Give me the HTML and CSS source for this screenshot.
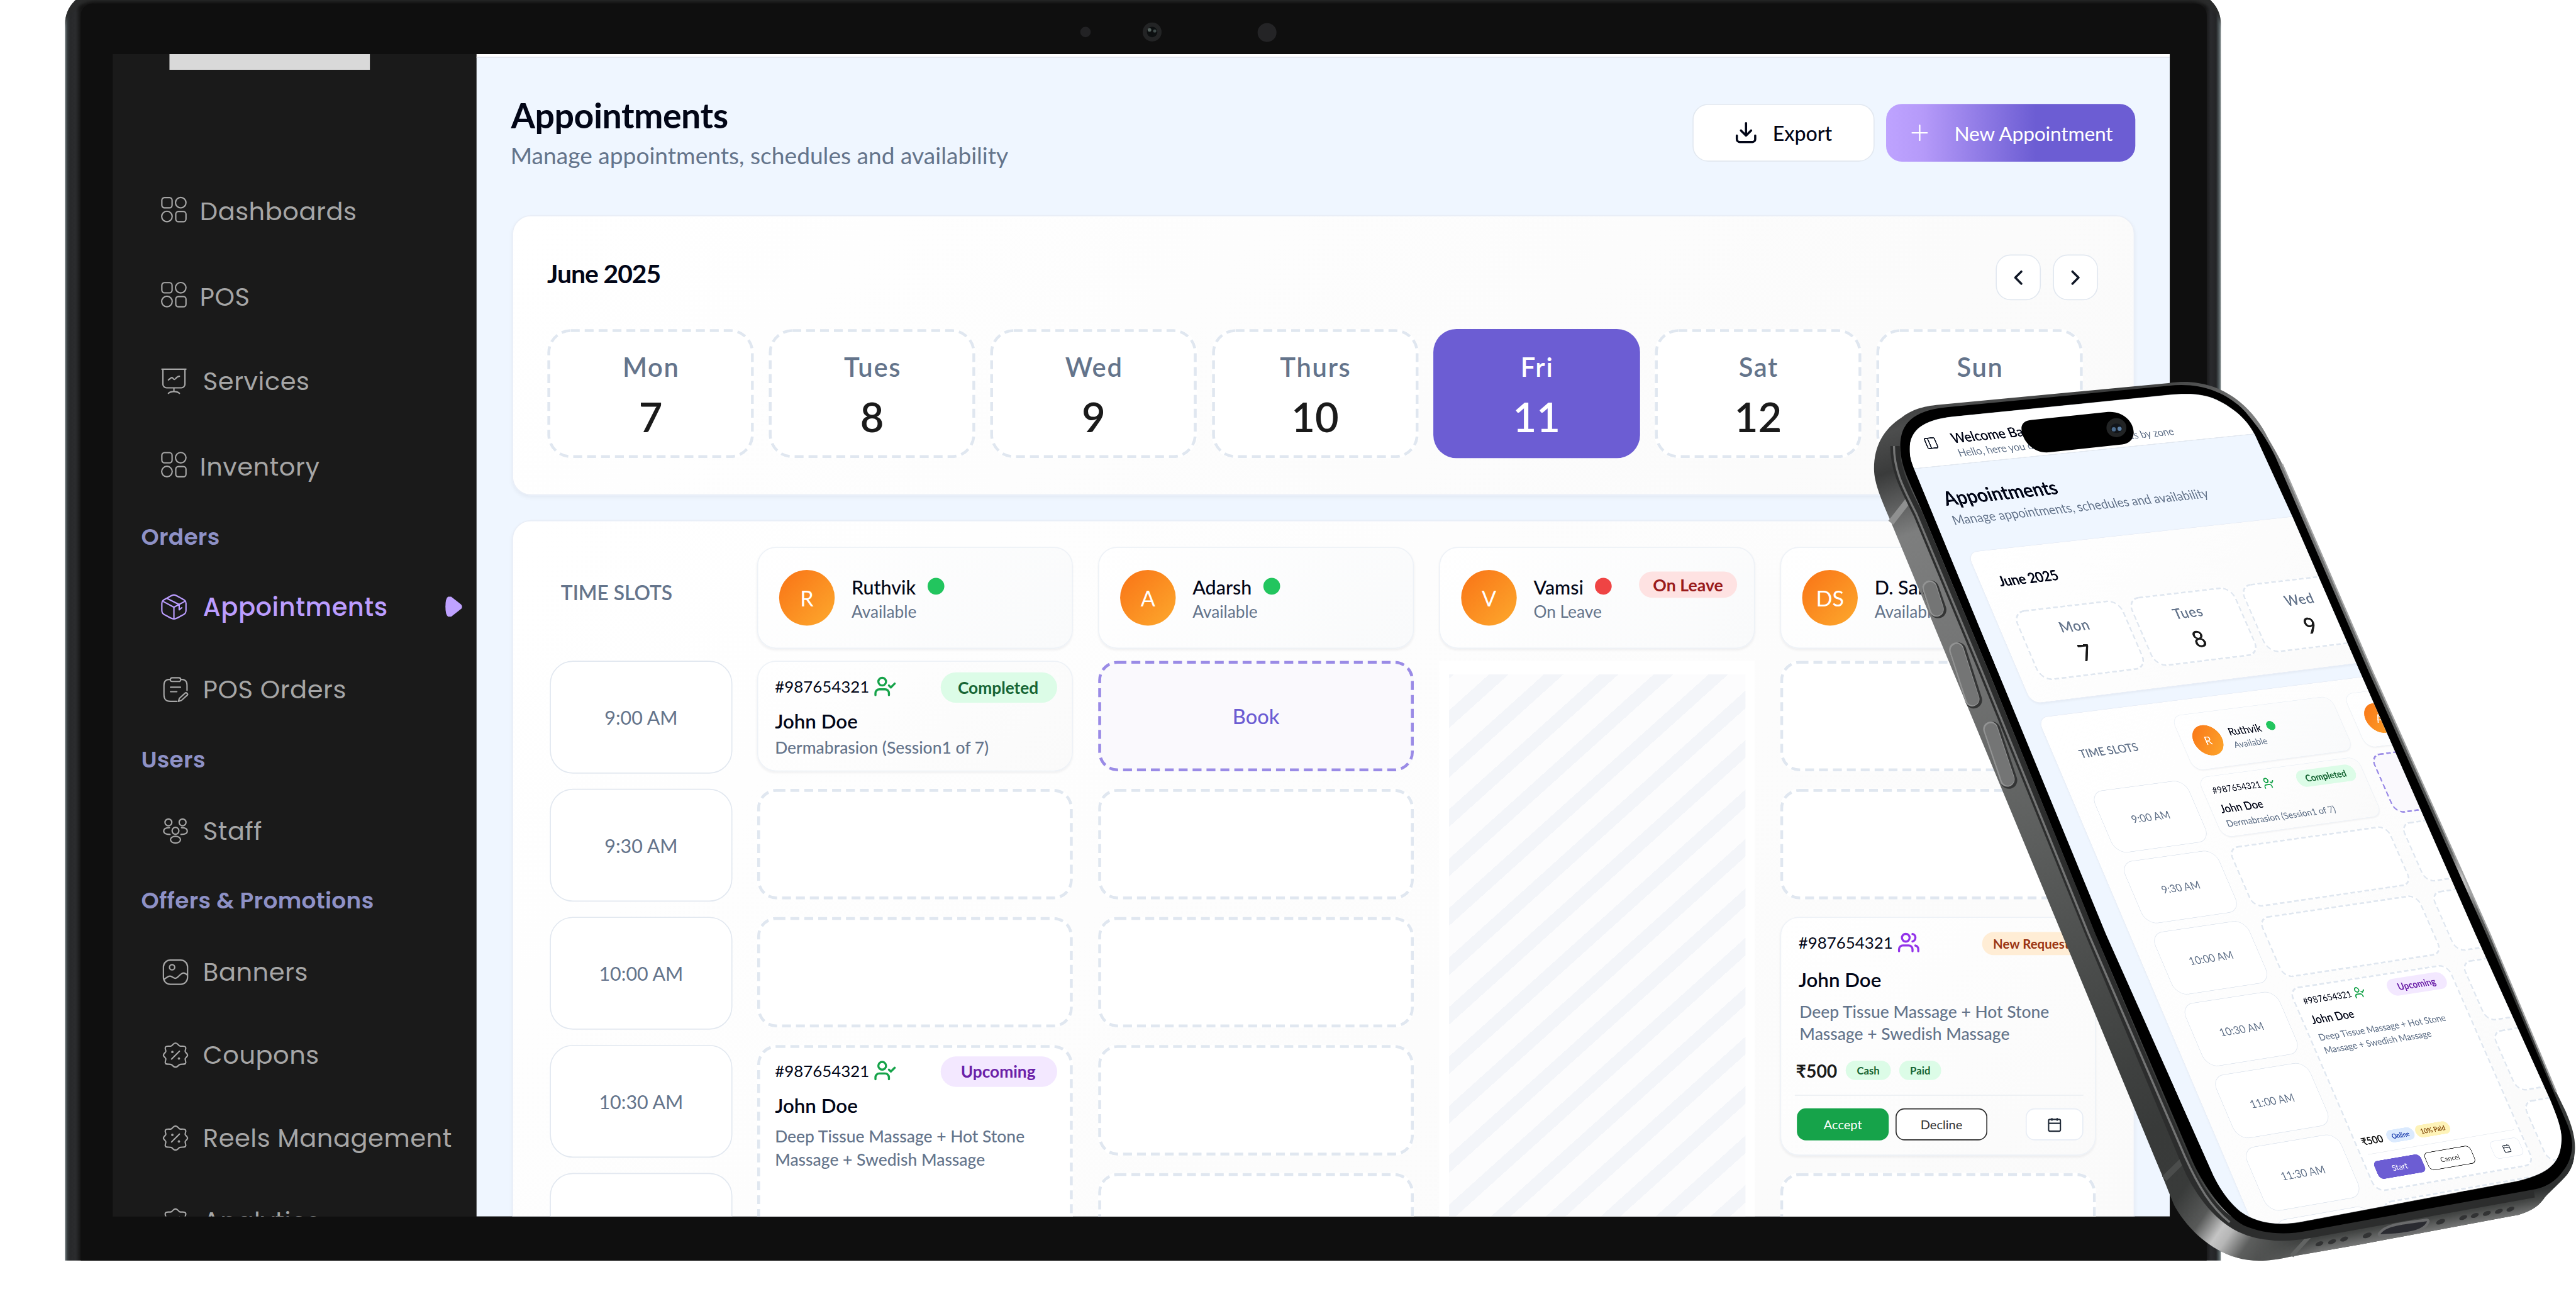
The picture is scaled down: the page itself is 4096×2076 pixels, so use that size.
FILE: index.html
```html
<!DOCTYPE html>
<html lang="en">
<head>
<meta charset="utf-8">
<title>Appointments</title>
<link rel="stylesheet" href="styles.css">
</head>
<body>
<svg class="defs" aria-hidden="true">
  <symbol id="i-grid" viewBox="0 0 49 49"><rect x="1.5" y="1.5" width="19.5" height="19.5" rx="5"/><circle cx="37.5" cy="11.2" r="10"/><circle cx="11.2" cy="37.5" r="10"/><rect x="28" y="28" width="19.5" height="19.5" rx="5"/></symbol>
  <symbol id="i-board" viewBox="0 0 49 49"><path d="M1.5 1.5h46M3.5 1.5V30a7 7 0 0 0 7 7h28a7 7 0 0 0 7-7V1.5M24.500 37v7M14 47.500c3-3 7-3.500 10.500-3.500s7.500.5 10.500 3.500M14 22l6-4.500c2-1.500 3 3.500 5.500 3.500S29 15 35 15"/></symbol>
  <symbol id="i-box" viewBox="0 0 49 49"><path d="M24.500 1.500c3 0 5 1.500 12 5.500 9 5 11 5.500 11 11v13c0 6-2 6.500-11 11.500-7 4-9 5-12 5s-5-1-12-5c-9-5-11-5.500-11-11.500V18c0-5.500 2-6 11-11 7-4 9-5.500 12-5.500zM24.500 25v22M24.500 25L3 13.500M24.500 25L46 13.500M12 8.500l22.500 11.500v10l5-4"/></symbol>
  <symbol id="i-clip" viewBox="0 0 49 49"><path d="M15 4.500c-9 0-12.500 3-12.500 12v17c0 9 3.500 13 12.500 13h12M34 4.500c9 0 12.500 3 12.500 12v9M18 1.500h13a3.500 3.500 0 0 1 0 7H18a3.500 3.500 0 0 1 0-7zM15 19.500h19M15 28h12M30 46.500l2-6 11-10c2-2 6 2 4 4l-11 10z"/></symbol>
  <symbol id="i-team" viewBox="0 0 49 49"><circle cx="11" cy="8" r="6.500"/><circle cx="38" cy="8" r="6.500"/><circle cx="24.500" cy="24" r="6.500"/><ellipse cx="24.500" cy="41" rx="9.500" ry="6.500"/><path d="M14 31c-6 0-12-1.500-12-6.500s5-6.500 11-6.500M35 31c6 0 12-1.500 12-6.500s-5-6.500-11-6.500"/></symbol>
  <symbol id="i-image" viewBox="0 0 49 49"><rect x="1.500" y="1.500" width="46" height="46" rx="13"/><circle cx="18" cy="15" r="5"/><path d="M3 38c5-4 8-6 11-6 5 0 6 5 11 4s9-10 15-10c3 0 5 2 7 4"/></symbol>
  <symbol id="i-pct" viewBox="0 0 49 49"><path d="M24.500 1.500c4 0 5 4 8 5.500s9-1 11 2-1 6-.5 8.500 4.500 4 4.500 7-4 4.500-4.500 7 2.500 6.500.5 9-8 .5-11 2-4 5-8 5-5-3.500-8-5-9 .5-11-2 1-6.500.5-9-4.500-4-4.500-7 4-4.500 4.500-7-2.500-5.500-.5-8.500 8-.5 11-2 4-5.500 8-5.500zM17 32l15-15"/><circle cx="18.500" cy="18.500" r="1"/><circle cx="31" cy="31" r="1"/></symbol>
  <symbol id="i-check" viewBox="0 0 24 24"><path d="m16 11 2 2 4-4M16 21v-2a4 4 0 0 0-4-4H6a4 4 0 0 0-4 4v2"/><circle cx="9" cy="7" r="4"/></symbol>
  <symbol id="i-users" viewBox="0 0 24 24"><path d="M16 21v-2a4 4 0 0 0-4-4H6a4 4 0 0 0-4 4v2M16 3.130a4 4 0 0 1 0 7.750M22 21v-2a4 4 0 0 0-3-3.870"/><circle cx="9" cy="7" r="4"/></symbol>
  <symbol id="i-cal" viewBox="0 0 24 24"><path d="M8 2v4M16 2v4M3 10h18"/><rect x="3" y="4" width="18" height="18" rx="2"/></symbol>
  <symbol id="i-down" viewBox="0 0 24 24"><path d="M12 1.500V15M6.500 9.500 12 15l5.500-5.500M2 15v4a3 3 0 0 0 3 3h14a3 3 0 0 0 3-3v-4"/></symbol>
  <symbol id="i-plus" viewBox="0 0 24 24"><path d="M12 2v20M2 12h20"/></symbol>
  <symbol id="i-prev" viewBox="0 0 24 24"><path d="m15 18-6-6 6-6"/></symbol>
  <symbol id="i-next" viewBox="0 0 24 24"><path d="m9 18 6-6-6-6"/></symbol>
  <symbol id="i-panel" viewBox="0 0 24 24"><rect x="3" y="3" width="18" height="18" rx="2"/><path d="M9 3v18"/></symbol>
</svg>

<div class="window">
<div class="stage">
  <div class="laptop">
    <div class="bezel">
      <svg class="cams" viewBox="0 0 400 44"><circle cx="28" cy="22" r="10" fill="#222224"/><circle cx="155" cy="22" r="18" fill="#232425"/><circle cx="155" cy="22" r="10" fill="#0c0f10"/><circle cx="150" cy="18" r="3.500" fill="#56635f"/><circle cx="160" cy="20" r="3" fill="#3f4b4a"/><circle cx="374" cy="23" r="18" fill="#242426"/></svg>
      <div class="screen">
        <nav class="side">
          <div class="logo"></div>
          <a class="item near"><svg><use href="#i-grid"/></svg><span>Dashboards</span></a>
          <a class="item near"><svg><use href="#i-grid"/></svg><span>POS</span></a>
          <a class="item first"><svg><use href="#i-board"/></svg><span>Services</span></a>
          <a class="item near"><svg><use href="#i-grid"/></svg><span>Inventory</span></a>
          <h3>Orders</h3>
          <a class="item active"><svg><use href="#i-box"/></svg><span>Appointments</span><svg class="arrow" viewBox="0 0 33 40"><path d="M5 1h6l18 14q6 5 0 10L11 39H5q-5-3-5-19T5 1z"/></svg></a>
          <a class="item"><svg><use href="#i-clip"/></svg><span>POS Orders</span></a>
          <h3>Users</h3>
          <a class="item"><svg><use href="#i-team"/></svg><span>Staff</span></a>
          <h3>Offers &amp; Promotions</h3>
          <a class="item"><svg><use href="#i-image"/></svg><span>Banners</span></a>
          <a class="item"><svg><use href="#i-pct"/></svg><span>Coupons</span></a>
          <a class="item"><svg><use href="#i-pct"/></svg><span>Reels Management</span></a>
          <a class="item"><svg><use href="#i-pct"/></svg><span>Analytics</span></a>
        </nav>
        <div class="view">
          <div class="strip"></div>
          <main class="main">
            <header class="head">
              <div><h1>Appointments</h1><p>Manage appointments, schedules and availability</p></div>
              <div class="actions">
                <button class="btn"><svg><use href="#i-down"/></svg>Export</button>
                <button class="btn primary"><svg><use href="#i-plus"/></svg>New Appointment</button>
              </div>
            </header>
            <section class="card month">
              <div class="month-head"><h2>June 2025</h2><div class="arrows"><button><svg><use href="#i-prev"/></svg></button><button><svg><use href="#i-next"/></svg></button></div></div>
              <div class="days">
                <div class="day"><svg class="dash"><rect/></svg><span>Mon</span><b>7</b></div>
                <div class="day"><svg class="dash"><rect/></svg><span>Tues</span><b>8</b></div>
                <div class="day"><svg class="dash"><rect/></svg><span>Wed</span><b>9</b></div>
                <div class="day"><svg class="dash"><rect/></svg><span>Thurs</span><b>10</b></div>
                <div class="day on"><span>Fri</span><b>11</b></div>
                <div class="day"><svg class="dash"><rect/></svg><span>Sat</span><b>12</b></div>
                <div class="day"><svg class="dash"><rect/></svg><span>Sun</span></div>
              </div>
            </section>
            <section class="card plan">
              <div class="times"><h4>TIME SLOTS</h4><div>9:00 AM</div><div>9:30 AM</div><div>10:00 AM</div><div>10:30 AM</div><div></div></div>
              <div class="col">
                <div class="person"><i>R</i><div><b>Ruthvik<em></em></b><span>Available</span></div></div>
                <div class="cell solid"><div class="top"><span>#987654321</span><svg class="ok"><use href="#i-check"/></svg><mark class="green">Completed</mark></div><h5>John Doe</h5><p>Dermabrasion (Session1 of 7)</p></div>
                <div class="cell"><svg class="dash"><rect/></svg></div>
                <div class="cell"><svg class="dash"><rect/></svg></div>
                <div class="cell tall"><svg class="dash"><rect/></svg><div class="top"><span>#987654321</span><svg class="ok"><use href="#i-check"/></svg><mark class="violet">Upcoming</mark></div><h5>John Doe</h5><p class="two">Deep Tissue Massage + Hot Stone Massage + Swedish Massage</p></div>
              </div>
              <div class="col">
                <div class="person"><i>A</i><div><b>Adarsh<em></em></b><span>Available</span></div></div>
                <div class="cell book"><svg class="dash"><rect/></svg>Book</div>
                <div class="cell"><svg class="dash"><rect/></svg></div>
                <div class="cell"><svg class="dash"><rect/></svg></div>
                <div class="cell"><svg class="dash"><rect/></svg></div>
                <div class="cell"><svg class="dash"><rect/></svg></div>
              </div>
              <div class="col">
                <div class="person"><i>V</i><div><b>Vamsi<em class="off"></em></b><span>On Leave</span></div><mark class="red">On Leave</mark></div>
                <div class="leave"><div></div></div>
              </div>
              <div class="col">
                <div class="person"><i>DS</i><div><b>D. Sanjay<em></em></b><span>Available</span></div></div>
                <div class="cell"><svg class="dash"><rect/></svg></div>
                <div class="cell"><svg class="dash"><rect/></svg></div>
                <div class="cell solid request">
                  <div class="top"><span>#987654321</span><svg class="grp"><use href="#i-users"/></svg><mark class="orange">New Request</mark></div>
                  <h5>John Doe</h5><p class="two">Deep Tissue Massage + Hot Stone Massage + Swedish Massage</p>
                  <div class="pay"><b>₹500</b><mark class="green">Cash</mark><mark class="green">Paid</mark></div>
                  <div class="foot"><button class="accept">Accept</button><button>Decline</button><button class="cal"><svg><use href="#i-cal"/></svg></button></div>
                </div>
                <div class="cell"><svg class="dash"><rect/></svg></div>
              </div>
            </section>
          </main>
        </div>
      </div>
    </div>
  </div>

  <div class="phone">
    <svg class="body" viewBox="0 0 4910 2489">
      <defs>
        <linearGradient id="side" gradientUnits="userSpaceOnUse" x1="3600" y1="730" x2="4200" y2="2400">
          <stop offset="0" stop-color="#2b2c2c"/><stop offset=".05" stop-color="#4c4d4d"/><stop offset=".09" stop-color="#3a3b3b"/><stop offset=".16" stop-color="#7d7e7e"/><stop offset=".3" stop-color="#747575"/><stop offset=".5" stop-color="#5e605f"/><stop offset=".7" stop-color="#464847"/><stop offset=".85" stop-color="#383a39"/><stop offset="1" stop-color="#3a3c3b"/>
        </linearGradient>
        <linearGradient id="base" gradientUnits="userSpaceOnUse" x1="4560" y1="2318" x2="4568" y2="2362">
          <stop offset="0" stop-color="#2e3030"/><stop offset=".4" stop-color="#474948"/><stop offset="1" stop-color="#7d7e7e"/>
        </linearGradient>
        <linearGradient id="corner" gradientUnits="userSpaceOnUse" x1="4150" y1="2283" x2="4350" y2="2420">
          <stop offset="0" stop-color="#c4c4c4" stop-opacity="0"/><stop offset=".25" stop-color="#c4c4c4" stop-opacity=".22"/><stop offset=".42" stop-color="#c4c4c4"/><stop offset=".5" stop-color="#c4c4c4" stop-opacity=".9"/><stop offset=".66" stop-color="#c4c4c4" stop-opacity=".25"/><stop offset="1" stop-color="#c4c4c4" stop-opacity="0"/>
        </linearGradient>
        <linearGradient id="fade"><stop offset="0" stop-color="#fff" stop-opacity="0"/><stop offset=".2" stop-color="#fff"/></linearGradient>
        <mask id="lower"><path d="M4300 2240H4800L4910 2205V2480H4300Z" fill="url(#fade)"/></mask>
        <path id="shell" d="M3572 893C3572 850 3590 818 3624 796 3645 780 3665 774 3697 771L4133 730C4155 727 4172 727 4190 730 4245 738 4290 775 4318 825 4328 845 4340 862 4350 884L4522 1280 4746 1780 4872 2080 4890 2117C4900 2140 4909 2165 4908 2190 4907 2212 4902 2226 4893 2238 4880 2254 4862 2268 4850 2282 4842 2294 4830 2306 4800 2315L4783 2318 4500 2371 4363 2395C4320 2405 4290 2404 4262 2396 4215 2382 4172 2345 4146 2300 4138 2283 4126 2250 4110 2213L3604 994C3585 950 3572 920 3572 893Z"/>
      </defs>
      <use href="#shell" fill="url(#side)"/>
      <use href="#shell" fill="url(#base)" mask="url(#lower)"/>
      <use href="#shell" fill="url(#corner)"/>
      <path d="M4350 884L4522 1280 4746 1780 4872 2080" fill="none" stroke="#a2a3a3" stroke-width="3"/>
      <g fill="none">
        <path d="M3604 996L3640 950" stroke="#8f9090" stroke-width="12"/>
        <path d="M4125 2246L4166 2206" stroke="#4b4d4c" stroke-width="12"/>
        <path d="M4399 2343L4400 2358 4368 2393" stroke="#626463" stroke-width="8"/>
      </g>
      <g fill="none" stroke-linejoin="round">
        <path d="M3612 850C3612 900 3634 935 3656 980L3781 1280 3984 1780 4166 2214C4186 2262 4222 2316 4272 2340 4310 2358 4360 2358 4403 2350L4830 2273" stroke="#2c2d2d" stroke-width="18"/>
        <path d="M3610 850C3610 900 3631 935 3653 980L3778 1280 3981 1780 4165 2205C4190 2260 4214 2300 4250 2329" stroke="#747575" stroke-width="4"/>
      </g>
      <path fill="#000" d="M3622 851C3622 812 3640 783 3711 776L4133 735C4200 727 4250 752 4280 785 4304 814 4320 835 4337 870L4515 1280 4739 1780 4887 2127C4898 2152 4905 2170 4902 2192 4899 2212 4892 2224 4880 2238 4868 2252 4852 2262 4833 2266L4400 2345C4355 2354 4315 2351 4277 2335 4240 2316 4198 2258 4176 2206L3994 1780 3791 1280 3666 980C3645 930 3622 890 3622 851Z"/>
      <g stroke-linecap="round" fill="none">
        <path d="M3680 1122L3694 1162M3732 1240L3762 1334M3797 1391L3829 1487" stroke="#343535" stroke-width="32"/>
        <path d="M3678 1120L3691 1161M3729 1238L3759 1332M3794 1389L3826 1485" stroke="#929393" stroke-width="28"/>
        <path d="M3679 1121L3692 1161M3730 1239L3760 1332M3795 1390L3827 1485" stroke="#747575" stroke-width="24"/>
      </g>
      <path d="M4537 2352C4548 2336 4575 2334 4626 2327 4620 2343 4595 2347 4567 2350Z" fill="#2a2b31" stroke="#6a6b6c" stroke-width="10" stroke-linejoin="round" paint-order="stroke"/>
      <g fill="#323334"><ellipse cx="4421" cy="2370" rx="8" ry="4" transform="rotate(-22 4421 2370)"/><ellipse cx="4445" cy="2366" rx="8" ry="4" transform="rotate(-22 4445 2366)"/><ellipse cx="4468" cy="2361" rx="8" ry="4" transform="rotate(-22 4468 2361)"/><ellipse cx="4512" cy="2354" rx="9" ry="4.500" transform="rotate(-22 4512 2354)"/><ellipse cx="4652" cy="2328" rx="9" ry="4.500" transform="rotate(-22 4652 2328)"/><ellipse cx="4695" cy="2320" rx="8" ry="4" transform="rotate(-22 4695 2320)"/><ellipse cx="4717" cy="2316" rx="8" ry="4" transform="rotate(-22 4717 2316)"/><ellipse cx="4740" cy="2312" rx="8" ry="4" transform="rotate(-22 4740 2312)"/><ellipse cx="4763" cy="2308" rx="8" ry="4" transform="rotate(-22 4763 2308)"/><ellipse cx="4785" cy="2304" rx="8" ry="4" transform="rotate(-22 4785 2304)"/></g>
    </svg>
    <div class="glass">
      <div class="tilt">
        <div class="bar"><svg><use href="#i-panel"/></svg><div><h2>Welcome Back,</h2><p>Hello, here you can manage your services by zone</p></div></div>
        <div class="main">
          <header class="head"><div><h1>Appointments</h1><p>Manage appointments, schedules and availability</p></div></header>
          <section class="card month">
            <div class="month-head"><h2>June 2025</h2></div>
            <div class="days">
              <div class="day"><svg class="dash"><rect/></svg><span>Mon</span><b>7</b></div>
              <div class="day"><svg class="dash"><rect/></svg><span>Tues</span><b>8</b></div>
              <div class="day"><svg class="dash"><rect/></svg><span>Wed</span><b>9</b></div>
            </div>
          </section>
          <section class="card plan">
            <div class="times"><h4>TIME SLOTS</h4><div>9:00 AM</div><div>9:30 AM</div><div>10:00 AM</div><div>10:30 AM</div><div>11:00 AM</div><div>11:30 AM</div><div></div></div>
            <div class="col">
              <div class="person"><i>R</i><div><b>Ruthvik<em></em></b><span>Available</span></div></div>
              <div class="cell solid"><div class="top"><span>#987654321</span><svg class="ok"><use href="#i-check"/></svg><mark class="green">Completed</mark></div><h5>John Doe</h5><p>Dermabrasion (Session1 of 7)</p></div>
              <div class="cell"><svg class="dash"><rect/></svg></div>
              <div class="cell"><svg class="dash"><rect/></svg></div>
              <div class="cell tall"><svg class="dash"><rect/></svg><div class="top"><span>#987654321</span><svg class="ok"><use href="#i-check"/></svg><mark class="violet">Upcoming</mark></div><h5>John Doe</h5><p class="two">Deep Tissue Massage + Hot Stone Massage + Swedish Massage</p>
                <div class="pay"><b>₹500</b><mark class="blue">Online</mark><mark class="yellow">10% Paid</mark></div>
                <div class="foot"><button class="start">Start</button><button>Cancel</button><button class="cal"><svg><use href="#i-cal"/></svg></button></div>
              </div>
              <div class="cell"><svg class="dash"><rect/></svg></div>
            </div>
            <div class="col">
              <div class="person"><i>A</i></div>
              <div class="cell book"><svg class="dash"><rect/></svg></div>
              <div class="cell"><svg class="dash"><rect/></svg></div>
              <div class="cell"><svg class="dash"><rect/></svg></div>
              <div class="cell"><svg class="dash"><rect/></svg></div>
              <div class="cell"><svg class="dash"><rect/></svg></div>
              <div class="cell"><svg class="dash"><rect/></svg></div>
            </div>
          </section>
        </div>
      </div>
    </div>
    <svg class="island" viewBox="0 0 4910 2489">
      <path d="M3873 800L4018 785C4046 783 4067 803 4067 825 4066 838 4058 845 4045 847L3905 862C3876 864 3853 840 3853 815 3854 806 3860 801 3873 800Z"/>
      <ellipse cx="4034" cy="815" rx="19" ry="18" fill="#222425"/><ellipse cx="4034" cy="816" rx="11" ry="9" fill="#11151b"/><circle cx="4029" cy="818" r="4" fill="#4a6a8c"/><circle cx="4040" cy="817" r="4" fill="#5b7ea3"/>
    </svg>
  </div>
</div>
</div>
</body>
</html>
```
FILE: styles.css
```css
* { box-sizing: border-box; margin: 0; padding: 0; }
html, body { width: 4096px; height: 2076px; overflow: hidden; background: #fff; }
body { font-family: Lato, "Noto Sans", sans-serif; color: #020617; }
svg { display: block; fill: none; stroke: none; flex: none; }
symbol { overflow: visible; }
button { font: inherit; border: 0; }
.defs { position: absolute; width: 0; height: 0; }

/* The scene is laid out on a 4910 x 2489 canvas and scaled to the window. */
.window { width: 4096px; height: 2076px; overflow: hidden; }
.stage { position: relative; width: 4910px; height: 2489px; overflow: hidden; background: #fff; transform: scale(.83422); transform-origin: 0 0; }

/* laptop */
.laptop { width: 4109px; height: 2417px; margin: -15px 0 0 124px; padding: 22px 27px 0 30px; border-radius: 60px 60px 0 0; background: linear-gradient(90deg, #6c7679 0, #33383a 5px, #28292b 10px, #2b2c2e 20px, #151515 30px, #151515 4080px, #2a2b2e 4090px, #242527 4100px, #4a5356 4105px, #7c8688 4109px); box-shadow: inset 0 22px 5px -5px #2a2b2b; }
.bezel { position: relative; height: 2395px; padding: 96px 71px 84px 61px; border-radius: 22px 22px 0 0; background: #0f0f0f; }
.cams { position: absolute; left: 1887px; top: 32px; width: 400px; height: 44px; }
.screen { display: flex; width: 3921px; height: 2215px; overflow: hidden; background: #1a1a1a; }

/* sidebar */
.side { width: 693px; height: 2215px; overflow: hidden; background: #1a1a1a; font-family: Poppins, Inter, sans-serif; color: #a6a6a6; }
.logo { width: 382px; height: 30px; margin: 0 0 188px 108px; background: #d9d9d9; }
.item { display: flex; align-items: center; height: 158px; padding-left: 95px; font-size: 48px; letter-spacing: .6px; white-space: nowrap; }
.item svg { width: 49px; height: 49px; margin-right: 28px; stroke: currentColor; stroke-width: 2.600; stroke-linecap: round; stroke-linejoin: round; overflow: visible; }
.item span { position: relative; top: 1px; }
.near { height: 162px; padding-left: 92px; }
.near span { top: 2px; }
.near svg { margin-right: 25px; position: relative; top: -3px; }
.first { height: 162px; padding-left: 92px; }
.first svg { margin-right: 31px; }
.active { color: #bb9dff; font-weight: 500; padding-left: 92px; }
.active svg { margin-right: 31px; }
.item .arrow { width: 33px; height: 40px; margin: 0 26px 0 auto; fill: #bfa2ff; stroke: none; }
.side h3 { height: 111px; padding-left: 54px; font-size: 43px; line-height: 109px; font-weight: 600; letter-spacing: .4px; color: #8e91c6; }
.near + h3 { height: 108px; }

/* page */
.view { width: 3228px; height: 2215px; overflow: hidden; flex: none; }
.strip { height: 7px; background: #fff; border-bottom: 2px solid #e6ebf5; }
.main { padding: 70px 67px 0 68px; background: #eff6ff; }
.head { display: flex; justify-content: space-between; align-items: center; height: 147px; margin-bottom: 83px; }
h1 { font-size: 66.500px; line-height: 80px; font-weight: 700; letter-spacing: -.6px; margin: -3px 0 0 -2px; }
.head p { margin: 7px 0 0 -3px; font-size: 44.500px; line-height: 60px; color: #64748b; white-space: nowrap; }
.actions { display: flex; gap: 22px; margin: -2px -1px 0 0; }
.btn { display: flex; align-items: center; justify-content: center; gap: 30px; width: 347px; height: 110px; border: 2.500px solid #e2e8f0; border-radius: 30px; background: #fff; font-size: 38.500px; font-weight: 500; color: #020617; white-space: nowrap; }
.btn svg { width: 42px; height: 42px; stroke: currentColor; stroke-width: 2.400; stroke-linecap: round; stroke-linejoin: round; }
.primary { width: 475px; gap: 49px; padding-left: 4px; border: 0; background: linear-gradient(90deg, #bea3ff 0, #b59af9 15%, #6c5dd3 60%); color: #fff; font-size: 38px; font-weight: 400; letter-spacing: -.2px; }
.primary svg { width: 34px; height: 34px; stroke-width: 2; }

.card { border: 2px solid #e9eef7; border-radius: 36px; background: linear-gradient(135deg, #fff 0, #fafafa 100%); box-shadow: 0 4px 8px #0f172a0d; }
.month { height: 534px; padding: 72px 66px 0 65px; }
.month-head { display: flex; justify-content: space-between; height: 87px; margin-bottom: 56px; }
.month-head h2 { font-size: 49px; line-height: 72px; font-weight: 700; letter-spacing: -1.300px; }
.arrows { display: flex; gap: 23px; margin: 1px 2px 0 0; }
.arrows button { display: grid; place-items: center; width: 86px; height: 87px; border: 2.500px solid #e2e8f0; border-radius: 28px; background: #fff; }
.arrows svg { width: 46px; height: 46px; stroke: #111827; stroke-width: 2.200; stroke-linecap: round; stroke-linejoin: round; }
.days { display: flex; gap: 28px; }
.day { position: relative; width: 394.200px; height: 246px; padding-top: 42px; border-radius: 44px; background: #fff; text-align: center; flex: none; }
.day span, .day b { display: block; position: relative; }
.day span { padding-left: 2px; font-size: 50px; line-height: 61px; font-weight: 600; letter-spacing: 2px; color: #64748b; }
.day b { margin-top: 18px; font-size: 78px; line-height: 90px; font-weight: 600; color: #1a1a1a; }
.on { background: #6c5dd3; }
.day.on span, .day.on b { color: #fff; }
.dash { position: absolute; inset: 0; width: 100%; height: 100%; }
.dash rect { x: 3px; y: 3px; width: calc(100% - 6px); height: calc(100% - 6px); rx: 34px; stroke: #e0e7f0; stroke-width: 5.500px; stroke-dasharray: 17px 9.500px; }
.day .dash rect { rx: 42px; }

/* schedule */
.plan { display: flex; gap: 48px; height: 1900px; margin-top: 47px; padding: 49px 70px 0; }
.view .plan { height: 1480px; }
.times { width: 348px; flex: none; font-size: 36.500px; color: #64748b; }
.times h4 { height: 217px; padding: 57px 0 0 21px; font-size: 38px; line-height: 60px; font-weight: 600; }
.times div { display: grid; place-items: center; height: 215px; margin-bottom: 29px; border: 2.500px solid #e2e8f0; border-radius: 44px; background: #fff; }
.col { width: 602px; flex: none; margin-left: -1px; margin-right: 1px; }
.person { display: flex; align-items: center; gap: 32px; height: 194px; margin-bottom: 23px; padding: 0 32px 0 40px; border: 2px solid #eef2f7; border-radius: 36px; background: linear-gradient(135deg, #fff, #f9fafb); box-shadow: 0 3px 4px #0f172a0d; }
.person i { display: grid; place-items: center; width: 106px; height: 106px; border-radius: 50%; background: linear-gradient(135deg, #f97316, #fda92d); color: #fff; font-style: normal; font-size: 41px; }
.person b { display: flex; align-items: center; gap: 22px; margin-top: 3px; font-size: 36.500px; line-height: 48px; font-weight: 500; white-space: nowrap; }
.person em { width: 32px; height: 32px; margin-top: -4px; border-radius: 50%; background: #22c55e; }
.person .off { background: #ef4444; }
.person span { display: block; font-size: 31.500px; line-height: 44px; color: #64748b; }
mark { display: grid; place-items: center; border-radius: 40px; font-weight: 700; white-space: nowrap; }
.person mark { width: 187px; height: 50px; margin: -50px 0 0 auto; font-size: 32px; }
.red { background: #fee2e2; color: #991b1b; }
.green { background: #dcfce7; color: #166534; }
.violet { background: #f3e8ff; color: #6b21a8; }
.orange { background: #ffedd5; color: #9a3412; }
.blue { background: #dbeafe; color: #1e40af; }
.yellow { background: #fef3b8; color: #854d0e; }

.cell { position: relative; height: 211px; margin-bottom: 33px; padding: 22px 30px 0 34px; border-radius: 36px; background: #fff; }
.solid { padding: 20px 28px 0 32px; border: 2px solid #eef2f7; background: linear-gradient(135deg, #fff, #fafafa); box-shadow: 0 3px 4px #0f172a0d; }
.tall { height: 699px; }
.top { position: relative; display: flex; align-items: center; height: 58px; font-size: 31px; }
.top > span { margin-top: -4px; }
.top > svg { width: 44px; height: 44px; margin: 0 0 4px 8px; stroke-width: 2.200; stroke-linecap: round; stroke-linejoin: round; }
.ok { stroke: #16a34a; }
.grp { stroke: #9333ea; }
.top mark { width: 222px; height: 58px; margin-left: auto; padding-right: 3px; font-size: 31.500px; }
h5 { margin-top: 10px; font-size: 37.500px; line-height: 50px; font-weight: 600; position: relative; }
.cell p { position: relative; margin-top: 3px; font-size: 31.700px; line-height: 44px; font-weight: 500; color: #64748b; white-space: nowrap; }
.cell .two { margin-top: 12px; width: 510px; white-space: normal; }
.book { display: grid; place-items: center; padding: 0; background: #faf9fd; color: #6c5dd3; font-size: 39px; font-weight: 500; }
.book .dash rect { stroke: #9a8be6; }
.leave { height: 1200px; padding: 26px 18px 0 19px; background: #fff; }
.leave div { height: 1174px; background: repeating-linear-gradient(138deg, #f3f5f9 0 6px, #fcfcfd 6px 51px, #f3f5f9 51px 70px); }

.request { height: 455px; padding-left: 33px; }
.request .top mark { width: 187px; height: 44px; padding-right: 0; font-size: 24.500px; }
.request h5 { margin-top: 15px; }
.request .two { margin: 16px 0 0 2px; line-height: 41px; }
.pay { position: absolute; left: 28px; bottom: 142px; display: flex; align-items: center; height: 38px; }
.pay b { width: 95px; font-size: 34px; font-weight: 700; color: #1a1a1a; }
.pay mark { width: 86px; height: 37px; margin-right: 16px; font-size: 20px; }
.pay mark + mark { width: 80px; }
.foot { position: absolute; left: 26px; right: 22px; bottom: 27px; display: flex; gap: 13px; padding: 24px 0 0 4px; border-top: 2px solid #eceff3; }
.foot button { display: grid; place-items: center; width: 175px; height: 61px; border: 2.500px solid #2b2b2b; border-radius: 17px; background: #fff; color: #333; font-size: 24px; font-weight: 400; }
.foot .accept { border: 0; background: #16a34a; color: #fff; }
.foot .start { border: 0; background: #6c5dd3; color: #fff; font-size: 27px; font-weight: 500; }
.foot .cal { width: 110px; margin-left: auto; border-color: #e8edf5; }
.cal svg { width: 30px; height: 30px; stroke: #1f2937; stroke-width: 2; }
.tall .pay mark { width: 102px; height: 42px; margin-right: 6px; font-size: 22px; }
.tall .pay mark + mark { width: 128px; }
.tall .pay { left: 26px; bottom: 151px; }
.tall .foot { left: 30px; bottom: 39px; }

/* phone */
.phone { position: absolute; inset: 0; }
.phone > svg { position: absolute; inset: 0; width: 4910px; height: 2489px; }
.island { fill: #000; }
.glass { position: absolute; inset: 0; overflow: hidden; background: #eff6ff; clip-path: path("M3640 856C3640 820 3665 800 3724 794L4130 753C4170 749 4200 750 4225 762 4262 780 4283 801 4298 829L4370 986 4498 1280 4718 1780 4859 2092C4875 2130 4884 2155 4882 2175 4880 2215 4860 2236 4795 2251L4391 2327C4340 2337 4300 2330 4270 2308 4245 2287 4230 2262 4219 2240L4014 1780 3808 1280 3650 897C3643 880 3640 870 3640 856Z"); }
.tilt { position: absolute; left: 0; top: 0; width: 1480px; background: #eff6ff; transform-origin: 0 0; transform: matrix3d(.6215, -.0318, 0, .000025, .18447, .52873, 0, -.0000122, 0, 0, 1, 0, 4099, 1557.3, 0, 1) translate(-313px, -1620px); }
.tilt .main { padding-right: 0; padding-top: 71px; }
.bar { display: flex; gap: 54px; height: 360px; padding: 242px 0 0 81px; background: #fff; border-bottom: 3px solid #e2e8f0; }
.bar svg { width: 48px; height: 48px; margin-top: 11px; stroke: #111827; stroke-width: 2; }
.bar h2 { font-size: 48px; line-height: 50px; font-weight: 600; letter-spacing: -.5px; }
.bar p { margin: 5px 0 0 2px; font-size: 37px; line-height: 44px; color: #64748b; }
```
